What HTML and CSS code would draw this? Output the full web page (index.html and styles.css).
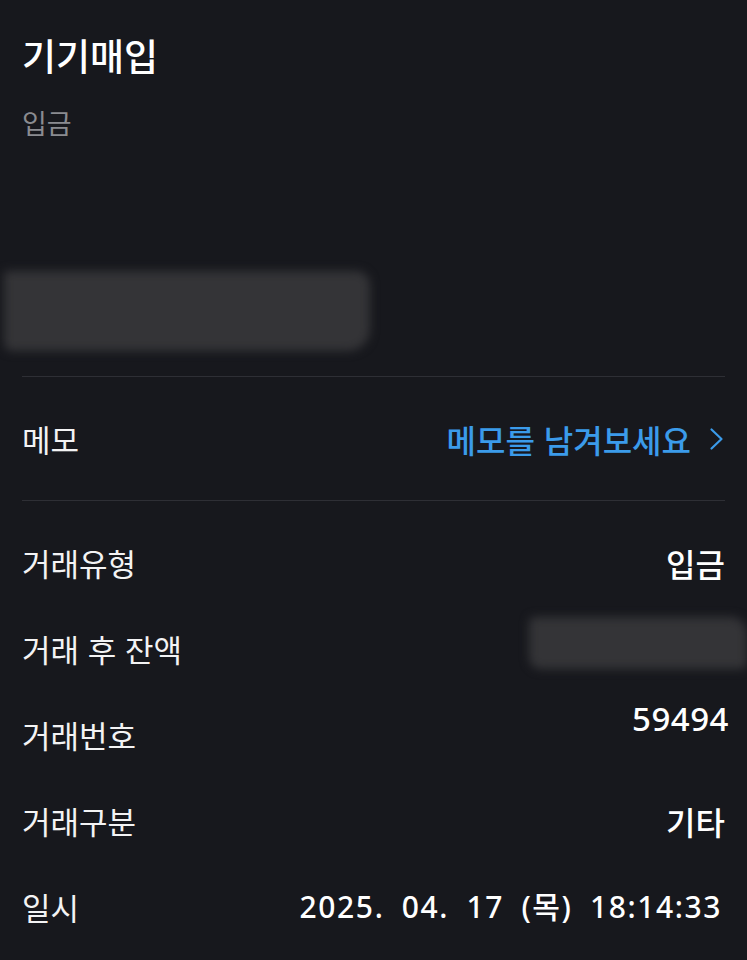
FILE: index.html
```html
<!DOCTYPE html>
<html lang="ko">
<head>
<meta charset="utf-8">
<link rel="stylesheet" href="styles.css">
</head>
<body>
<div class="page">
  <header class="head">
    <h1 class="title">기기매입</h1>
    <p class="sub">입금</p>
    <div class="redact redact-amount"></div>
  </header>
  <div class="divider"></div>
  <div class="memo-row">
    <span class="label">메모</span>
    <a class="memo-link">메모를 남겨보세요
      <svg class="chev" width="15" height="24" viewBox="0 0 15 24"><polyline points="2.5,2.5 12.5,12 2.5,21.5" fill="none" stroke="#3b9bea" stroke-width="2.2" stroke-linecap="round" stroke-linejoin="round"/></svg>
    </a>
  </div>
  <div class="divider"></div>
  <div class="info">
    <div class="row"><span class="label">거래유형</span><span class="value">입금</span></div>
    <div class="row"><span class="label">거래 후 잔액</span><div class="redact redact-balance"></div></div>
    <div class="row"><span class="label">거래번호</span><span class="value num top">59494</span></div>
    <div class="row"><span class="label">거래구분</span><span class="value">기타</span></div>
    <div class="row"><span class="label">일시</span><span class="value num date">2025. 04. 17 (목) 18:14:33</span></div>
  </div>
</div>
</body>
</html>
```
FILE: styles.css
```css
html, body {
  margin: 0;
  padding: 0;
  background: #17181d;
}
body {
  font-family: "Noto Sans CJK KR", "Noto Sans", sans-serif;
  color: #f3f3f4;
  overflow: hidden;
}
.page {
  padding: 0 22px 0 22px;
  height: 960px;
  box-sizing: border-box;
}
.head {
  padding-top: 34px;
}
.title {
  margin: 0;
  font-size: 37px;
  line-height: 42px;
  font-weight: 500;
  color: #ffffff;
}
.sub {
  margin: 29px 0 0 0;
  font-size: 27px;
  line-height: 36px;
  font-weight: 400;
  color: #8a8b90;
}
.redact {
  background: #343437;
  filter: blur(5px);
}
.redact-amount {
  margin: 130px 0 0 -18px;
  width: 366px;
  height: 80px;
  border-radius: 4px 14px 22px 8px;
}
.divider {
  height: 1px;
  background: #2e2f35;
}
.head + .divider {
  margin-top: 25px;
}
.memo-row {
  height: 123px;
  display: flex;
  align-items: center;
  justify-content: space-between;
}
.label {
  font-size: 31px;
  line-height: 36px;
  font-weight: 400;
  color: #f3f3f4;
}
.memo-link {
  display: flex;
  align-items: center;
  gap: 18px;
  font-size: 32px;
  line-height: 36px;
  font-weight: 500;
  color: #3b9bea;
  margin-right: 1px;
}
.chev {
  display: block;
}
.info {
  padding-top: 19px;
}
.row {
  height: 86px;
  display: flex;
  align-items: center;
  justify-content: space-between;
}
.value {
  font-size: 32px;
  line-height: 36px;
  font-weight: 500;
  color: #ffffff;
}
.num {
  font-family: "Noto Sans", "Noto Sans CJK KR", sans-serif;
  font-weight: 500;
}
.top {
  align-self: flex-start;
  margin-top: 9px;
  font-size: 33px;
  letter-spacing: 0.5px;
  margin-right: -4px;
}
.date {
  font-size: 30px;
  letter-spacing: 1.6px;
  word-spacing: 8px;
  margin-right: 3px;
}
.redact-balance {
  width: 218px;
  height: 52px;
  margin-right: -22px;
  margin-top: -12px;
  border-radius: 6px 16px 6px 12px;
}
```
